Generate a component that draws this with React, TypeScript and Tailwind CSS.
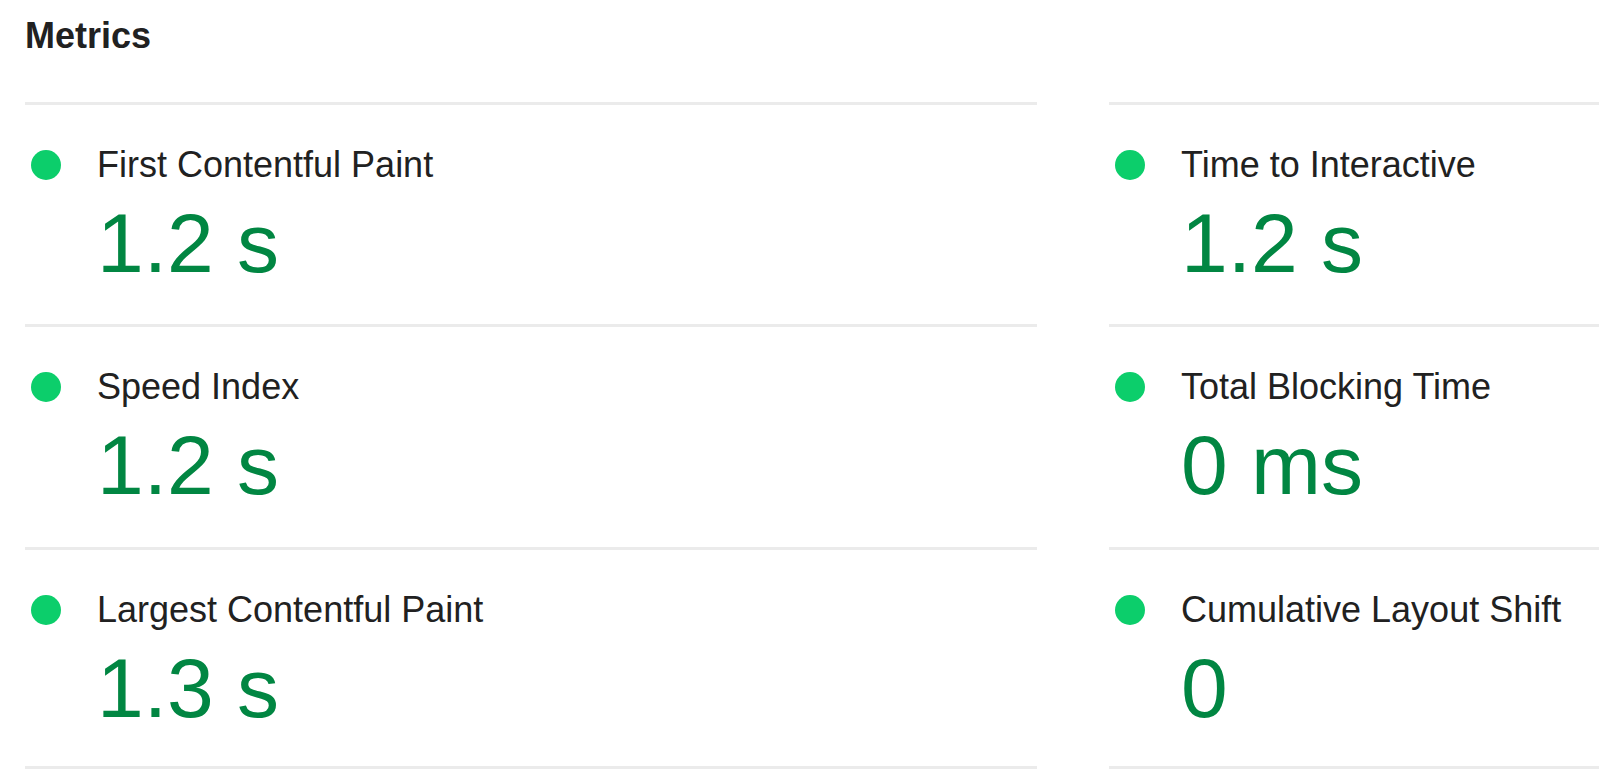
type Metric = { label: string; value: string };

const metrics: Metric[] = [
  { label: "First Contentful Paint", value: "1.2 s" },
  { label: "Time to Interactive", value: "1.2 s" },
  { label: "Speed Index", value: "1.2 s" },
  { label: "Total Blocking Time", value: "0 ms" },
  { label: "Largest Contentful Paint", value: "1.3 s" },
  { label: "Cumulative Layout Shift", value: "0" },
];

function MetricItem({ label, value }: Metric) {
  return (
    <div className="flex items-start gap-9 border-t-[3px] border-[#ebebeb] pt-10 pl-[6px] nth-last-[-n+2]:border-b-[3px]">
      <span className="flex h-10 shrink-0 items-center" aria-hidden="true">
        <span className="size-[30px] rounded-full bg-[#0cce6b]" />
      </span>
      <dl className="min-w-0">
        <dt className="text-[36px] leading-10 whitespace-nowrap">{label}</dt>
        <dd className="mt-4 text-[84px] leading-[84px] whitespace-nowrap text-[#018642]">{value}</dd>
      </dl>
    </div>
  );
}

export default function App() {
  return (
    <main className="min-h-screen overflow-hidden bg-white pt-4 pl-[25px] font-['Liberation_Sans',Arial,sans-serif] text-[#212121]">
      <h1 className="text-[36px] leading-10 font-bold">Metrics</h1>
      <section
        aria-label="Metrics"
        className="mt-[46px] grid grid-cols-[minmax(0,1012fr)_minmax(0,490fr)] grid-rows-[minmax(222px,auto)_minmax(223px,auto)_minmax(222px,auto)] gap-x-[72px]"
      >
        {metrics.map((metric) => (
          <MetricItem key={metric.label} {...metric} />
        ))}
      </section>
    </main>
  );
}
